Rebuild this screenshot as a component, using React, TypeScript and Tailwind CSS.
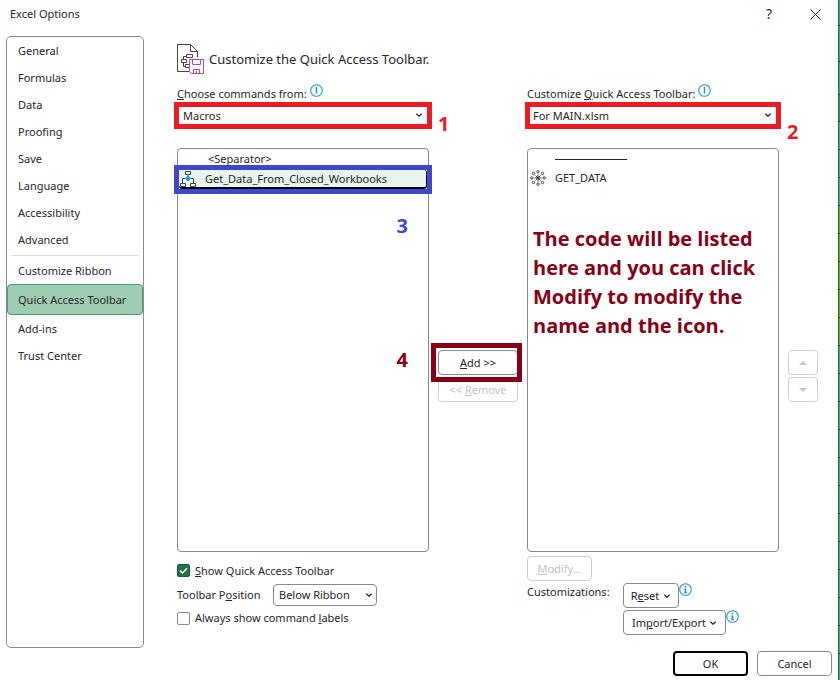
import { ReactNode, useState } from "react";
import clsx from "clsx";

const mainSections = [
  "General",
  "Formulas",
  "Data",
  "Proofing",
  "Save",
  "Language",
  "Accessibility",
  "Advanced",
];

const sheetRows = [
  "h-[26px] bg-[#3fa06c]",
  "h-[36px] bg-[#4ba374]",
  "h-[33px] bg-[#4ba374]",
  "h-[27px] bg-[#3a9561]",
  "h-[28px] bg-[#4fa877]",
  "h-[28px] bg-[#4fa877]",
  "h-[28px] bg-[#4fa877]",
  "h-[28px] bg-[#7faa10]",
  "h-[28px] bg-[#7faa10]",
  "h-[28px] bg-[#7faa10]",
  "h-[28px] bg-[#7faa10]",
  "h-[28px] bg-[#7faa10]",
];

const ChevronIcon = ({ className }: { className?: string }) => (
  <svg
    className={clsx("h-2 w-2 shrink-0", className)}
    viewBox="0 0 8 8"
    fill="none"
    stroke="#222"
    strokeWidth={1.2}
    aria-hidden="true"
  >
    <path d="M1.3 2.7 4 5.2 6.7 2.7" />
  </svg>
);

const InfoIcon = ({ serif = false }: { serif?: boolean }) => (
  <svg
    className="h-[13px] w-[13px] shrink-0"
    viewBox="0 0 13 13"
    fill="none"
    stroke="#2492d1"
    aria-hidden="true"
  >
    <circle cx="6.5" cy="6.5" r="5.8" strokeWidth={1.1} />
    {serif ? (
      <path d="M6.5 3V4.6M6.5 5.7V10M5.3 5.9H6.5M5.2 9.6H7.8" strokeWidth={1.5} />
    ) : (
      <path d="M6.5 3V9.6" strokeWidth={1.5} />
    )}
  </svg>
);

// Page with a flow chart and a purple floppy disk on top
const ToolbarPageIcon = () => (
  <svg
    className="h-[32px] w-[28px] shrink-0"
    viewBox="0 0 28 32"
    fill="none"
    stroke="#444"
    aria-hidden="true"
  >
    <path d="M12 28.5H.5V1.5H13.5L20.5 8.5V14M13.5 1.5V8.5H20.5" />
    <path d="M9.5 11.5H15.5V14.5H9.5ZM4.5 16.5H9.5V19.5H4.5ZM12 21.5H8.5V24.5H12M9.5 13.5H6.5V16.5M6.5 19.5V23.5H8.5" />
    <g stroke="#ab47bc">
      <path d="M12.5 16.5H26.5V30.5H14.5L12.5 28.5Z" fill="#fff" />
      <path d="M15.5 16.5V21.5H23.5V16.5M16.5 30V26.5H22.5V30M19.5 28V30" />
    </g>
  </svg>
);

const MacroIcon = () => (
  <svg
    className="h-4 w-4 shrink-0"
    viewBox="0 0 16 16"
    fill="none"
    stroke="#444"
    aria-hidden="true"
  >
    <path d="M5.5.5H10.5V3.5H5.5ZM.5 12.5H5.5V15.5H.5ZM10.5 12.5H15.5V15.5H10.5ZM8 3.5V5M5 7.5H2.5V12.5M11 7.5H13.5V12.5" />
    <path d="M8 5 10.5 7.5 8 10 5.5 7.5Z" fill="#2f9be0" stroke="#1f86cc" />
  </svg>
);

const HubIcon = () => (
  <svg
    className="h-4 w-4 shrink-0"
    viewBox="0 0 16 16"
    fill="none"
    stroke="#333"
    strokeWidth={0.9}
    aria-hidden="true"
  >
    <path d="M8 4.5V11.5M4.5 8H11.5M5.5 5.5 10.5 10.5M10.5 5.5 5.5 10.5" />
    <circle cx="8" cy="8" r="1" fill="#333" />
    <circle cx="8" cy="1.8" r="1.2" />
    <circle cx="8" cy="14.2" r="1.2" />
    <circle cx="1.8" cy="8" r="1.2" />
    <circle cx="14.2" cy="8" r="1.2" />
    <circle cx="3.5" cy="3.5" r="1.2" />
    <circle cx="12.5" cy="3.5" r="1.2" />
    <circle cx="3.5" cy="12.5" r="1.2" />
    <circle cx="12.5" cy="12.5" r="1.2" />
  </svg>
);

const NavItem = ({
  name,
  active,
  onSelect,
}: {
  name: string;
  active: boolean;
  onSelect: (name: string) => void;
}) => (
  <button
    type="button"
    onClick={() => onSelect(name)}
    className={clsx(
      "block w-full rounded-[4px] border px-[10px] text-left whitespace-nowrap",
      active
        ? "h-[31px] border-[#4b9b6b] bg-[#9fcdb3]"
        : "h-[27px] border-transparent"
    )}
  >
    {name}
  </button>
);

const PushButton = ({
  children,
  className,
  disabled,
  label,
}: {
  children: ReactNode;
  className?: string;
  disabled?: boolean;
  label?: string;
}) => (
  <button
    type="button"
    disabled={disabled}
    aria-label={label}
    className={clsx(
      "flex h-[25px] items-center justify-center rounded-[4px] border bg-white",
      disabled ? "border-[#d0d0d0] text-[#c3c3c3]" : "border-[#8a8a8a]",
      className
    )}
  >
    {children}
  </button>
);

const App = () => {
  const [section, setSection] = useState("Quick Access Toolbar");

  return (
    <div className="flex min-h-screen bg-white font-['Noto_Sans',sans-serif] text-[11px] leading-4 text-[#262626]">
      <div className="flex min-w-0 flex-1 flex-col">
        <header className="flex h-[36px] items-start pt-[6px] pl-[10px]">
          <h1 className="flex-1">Excel Options</h1>
          <button type="button" aria-label="Help" className="w-[46px] text-[14px]">
            ?
          </button>
          <button
            type="button"
            aria-label="Close"
            className="flex h-4 w-[46px] items-center justify-center"
          >
            <svg className="h-[11px] w-[11px]" viewBox="0 0 11 11" stroke="#222">
              <path d="M.5.5 10.5 10.5M10.5.5.5 10.5" />
            </svg>
          </button>
        </header>

        <div className="flex flex-1">
          <nav className="ml-[6px] w-[138px] shrink-0 rounded-[5px] border border-[#8a8a8a]">
            {mainSections.map((name) => (
              <NavItem
                key={name}
                name={name}
                active={section === name}
                onSelect={setSection}
              />
            ))}
            <hr className="mx-1 mt-[2px] mb-[1px] border-[#dcdcdc]" />
            {["Customize Ribbon", "Quick Access Toolbar", "Add-ins", "Trust Center"].map(
              (name) => (
                <NavItem
                  key={name}
                  name={name}
                  active={section === name}
                  onSelect={setSection}
                />
              )
            )}
          </nav>

          <main className="flex min-w-0 flex-1 flex-col pr-5 pl-[33px]">
            <div className="flex h-[48px] items-center gap-1 pt-[7px] pb-[9px]">
              <ToolbarPageIcon />
              <h2 className="text-[13px] leading-[18px]">
                Customize the Quick Access Toolbar.
              </h2>
            </div>

            <div className="grid flex-1 grid-cols-[minmax(0,1fr)_80px_minmax(0,1fr)_30px] grid-rows-[64px_1fr_96px] gap-x-[9px]">
              {/* Source and target pickers */}
              <div className="relative">
                <div className="flex h-[18px] items-start gap-[3px]">
                  <label htmlFor="source" className="pt-[2px]">
                    <u>C</u>hoose commands from:
                  </label>
                  <InfoIcon />
                </div>
                <div className="relative -mx-[3px] border-[5px] border-[#ed1c24]">
                  <select
                    id="source"
                    className="block h-[17px] w-full appearance-none bg-white pl-1"
                  >
                    <option>Macros</option>
                  </select>
                  <ChevronIcon className="pointer-events-none absolute top-1 right-1" />
                </div>
                <b className="absolute top-[28px] left-full ml-[9px] font-['Open_Sans',sans-serif] text-[20px] leading-6 text-[#ed1c24]">
                  1
                </b>
              </div>
              <div />
              <div className="relative">
                <div className="flex h-[18px] items-start gap-[3px]">
                  <label htmlFor="target" className="pt-[2px]">
                    Customize <u>Q</u>uick Access Toolbar:
                  </label>
                  <InfoIcon />
                </div>
                <div className="relative -mx-[2px] border-[5px] border-[#ed1c24]">
                  <select
                    id="target"
                    className="block h-[17px] w-full appearance-none bg-white pl-[3px]"
                  >
                    <option>For MAIN.xlsm</option>
                  </select>
                  <ChevronIcon className="pointer-events-none absolute top-1 right-1" />
                </div>
                <b className="absolute top-[36px] left-full ml-[8px] font-['Open_Sans',sans-serif] text-[20px] leading-6 text-[#ed1c24]">
                  2
                </b>
              </div>
              <div />

              {/* Available commands */}
              <div className="relative rounded-[4px] border border-[#8a8a8a] pt-[2px]">
                <ul>
                  <li className="pl-[30px]">&lt;Separator&gt;</li>
                  <li className="-mx-1 -mt-[2px] border-[5px] border-[#3f48cc]">
                    <button
                      type="button"
                      className="flex h-[19px] w-full items-center gap-[9px] rounded-[3px] border-r border-b-2 border-black bg-[#e8f4ee] pl-px"
                    >
                      <MacroIcon />
                      Get_Data_From_Closed_Workbooks
                    </button>
                  </li>
                </ul>
                <b className="absolute top-[65px] right-5 font-['Open_Sans',sans-serif] text-[20px] leading-6 text-[#3f48cc]">
                  3
                </b>
                <b className="absolute top-[199px] right-5 font-['Open_Sans',sans-serif] text-[20px] leading-6 text-[#880015]">
                  4
                </b>
              </div>

              <div className="flex flex-col justify-center gap-[2px] pt-[52px]">
                <div className="relative">
                  <PushButton className="w-full">
                    <span>
                      <u>A</u>dd &gt;&gt;
                    </span>
                  </PushButton>
                  <span className="pointer-events-none absolute -inset-y-[7px] -right-1 -left-[7px] border-[5px] border-[#880015]" />
                </div>
                <PushButton disabled>
                  <span>
                    &lt;&lt; <u>R</u>emove
                  </span>
                </PushButton>
              </div>

              {/* Commands on the toolbar */}
              <div className="rounded-[4px] border border-[#8a8a8a] pt-[10px]">
                <hr className="ml-[27px] w-[72px] border-[#222]" />
                <div className="mt-[10px] flex items-center gap-[9px] pl-[2px]">
                  <HubIcon />
                  GET_DATA
                </div>
                <p className="mt-[38px] pl-[5px] font-['Open_Sans',sans-serif] text-[20px] leading-[29px] font-bold text-[#880015]">
                  The code will be listed
                  <br />
                  here and you can click
                  <br />
                  Modify to modify the
                  <br />
                  name and the icon.
                </p>
              </div>

              <div className="flex flex-col justify-center gap-[2px] pt-[52px]">
                <PushButton disabled label="Move up">
                  <svg className="h-1 w-2" viewBox="0 0 8 4" fill="#c3c3c3">
                    <path d="M0 4 4 0 8 4Z" />
                  </svg>
                </PushButton>
                <PushButton disabled label="Move down">
                  <svg className="h-1 w-2" viewBox="0 0 8 4" fill="#c3c3c3">
                    <path d="M0 0H8L4 4Z" />
                  </svg>
                </PushButton>
              </div>

              {/* Display options */}
              <div className="pt-[9px]">
                <label className="flex h-[19px] items-center gap-[5px]">
                  <span className="relative h-[13px] w-[13px]">
                    <input
                      type="checkbox"
                      defaultChecked
                      className="peer block h-[13px] w-[13px] appearance-none rounded-[2px] border border-[#8a8a8a] checked:border-[#185c37] checked:bg-[#217346]"
                    />
                    <svg
                      className="pointer-events-none absolute inset-0 hidden peer-checked:block"
                      viewBox="0 0 13 13"
                      fill="none"
                      stroke="#fff"
                      strokeWidth={1.4}
                    >
                      <path d="M3 6.5 5.5 9 10 4.2" />
                    </svg>
                  </span>
                  <span>
                    <u>S</u>how Quick Access Toolbar
                  </span>
                </label>
                <div className="my-1 flex h-[22px] items-center gap-[11px]">
                  <label htmlFor="position" className="w-[85px] whitespace-nowrap">
                    Toolbar P<u>o</u>sition
                  </label>
                  <div className="relative">
                    <select
                      id="position"
                      className="block h-[22px] w-[104px] appearance-none rounded-[4px] border border-[#8a8a8a] bg-white pl-[5px]"
                    >
                      <option>Below Ribbon</option>
                    </select>
                    <ChevronIcon className="pointer-events-none absolute top-[7px] right-1" />
                  </div>
                </div>
                <label className="flex h-[16px] items-center gap-[5px]">
                  <input
                    type="checkbox"
                    className="h-[13px] w-[13px] appearance-none rounded-[2px] border border-[#8a8a8a]"
                  />
                  <span>
                    Always show command <u>l</u>abels
                  </span>
                </label>
              </div>
              <div />
              <div className="pt-1">
                <PushButton disabled className="w-[65px]">
                  <span>
                    <u>M</u>odify...
                  </span>
                </PushButton>
                <div className="mt-[2px] flex gap-[11px]">
                  <span className="w-[85px] pt-px">Customizations:</span>
                  <div className="flex flex-col gap-[2px]">
                    <div className="flex">
                      <PushButton className="w-[56px] gap-1">
                        <span>
                          R<u>e</u>set
                        </span>
                        <ChevronIcon />
                      </PushButton>
                      <InfoIcon serif />
                    </div>
                    <div className="flex">
                      <PushButton className="w-[103px] gap-[3px]">
                        <span>
                          Im<u>p</u>ort/Export
                        </span>
                        <ChevronIcon />
                      </PushButton>
                      <InfoIcon serif />
                    </div>
                  </div>
                </div>
              </div>
            </div>
          </main>
        </div>

        <footer className="flex justify-end gap-[9px] pt-[3px] pr-[6px] pb-1">
          <button
            type="button"
            className="h-[25px] w-[75px] rounded-[4px] border-2 border-black"
          >
            OK
          </button>
          <PushButton className="w-[75px]">Cancel</PushButton>
        </footer>
      </div>

      {/* Edge of the worksheet behind the dialog */}
      <div className="flex w-[2px] flex-col border-l border-[#107c41] bg-[#5f9d7a]">
        {sheetRows.map((row, i) => (
          <div key={i} className={clsx("border-b border-[#0b3d20]", row)} />
        ))}
        {Array.from({ length: 11 }, (_, i) => (
          <div key={i} className="h-[28px] border-b border-[#0b3d20]" />
        ))}
      </div>
    </div>
  );
};

export default App;
